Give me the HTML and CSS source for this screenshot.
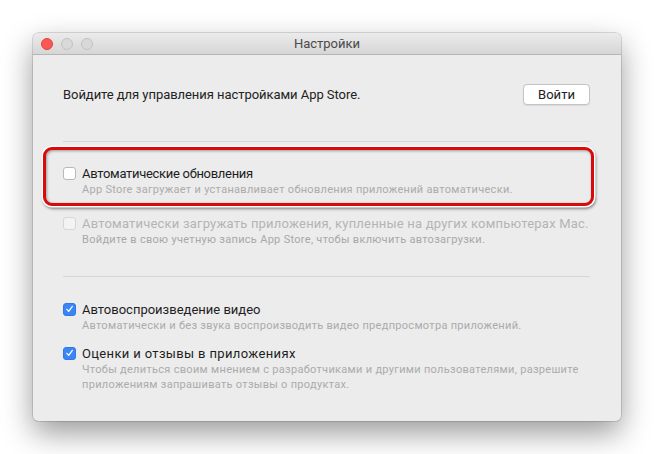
FILE: index.html
```html
<!DOCTYPE html>
<html lang="ru">
<head>
<meta charset="utf-8">
<title>Настройки</title>
<link rel="stylesheet" href="styles.css">
</head>
<body>
<div class="stage">
  <div class="window">
    <div class="titlebar">
      <div class="lights">
        <span class="light close"></span>
        <span class="light"></span>
        <span class="light"></span>
      </div>
      <div class="title">Настройки</div>
    </div>
    <div class="content">
      <div class="login-row">
        <span class="login-text">Войдите для управления настройками App Store.</span>
        <button class="btn">Войти</button>
      </div>
      <div class="sep sep-first"></div>
      <div class="item item-updates highlight">
        <div class="label-row"><span class="box"></span><span class="label">Автоматические обновления</span></div>
        <div class="sub">App Store загружает и устанавливает обновления приложений автоматически.</div>
      </div>
      <div class="item item-downloads disabled">
        <div class="label-row"><span class="box"></span><span class="label">Автоматически загружать приложения, купленные на других компьютерах Mac.</span></div>
        <div class="sub">Войдите в свою учетную запись App Store, чтобы включить автозагрузки.</div>
      </div>
      <div class="sep sep-second"></div>
      <div class="item item-video">
        <div class="label-row"><span class="box checked"><svg viewBox="0 0 14 14" width="14" height="14"><path d="M3.6 7.4 L6 10 L10.6 3.6" fill="none" stroke="#fff" stroke-width="1.6" stroke-linecap="round" stroke-linejoin="round"/></svg></span><span class="label">Автовоспроизведение видео</span></div>
        <div class="sub">Автоматически и без звука воспроизводить видео предпросмотра приложений.</div>
      </div>
      <div class="item item-ratings">
        <div class="label-row"><span class="box checked"><svg viewBox="0 0 14 14" width="14" height="14"><path d="M3.6 7.4 L6 10 L10.6 3.6" fill="none" stroke="#fff" stroke-width="1.6" stroke-linecap="round" stroke-linejoin="round"/></svg></span><span class="label">Оценки и отзывы в приложениях</span></div>
        <div class="sub">Чтобы делиться своим мнением с разработчиками и другими пользователями, разрешите приложениям запрашивать отзывы о продуктах.</div>
      </div>
    </div>
  </div>
</div>
</body>
</html>
```

FILE: styles.css
```css
* { box-sizing: border-box; }
html, body { margin: 0; padding: 0; background: #ffffff; }
body {
  font-family: Roboto, "Noto Sans", "Liberation Sans", sans-serif;
  -webkit-font-smoothing: antialiased;
}
.stage {
  padding: 33px 0 0 33px;
  width: 654px;
  height: 454px;
}
.window {
  width: 588px;
  height: 388px;
  background: #ececec;
  border-radius: 5px;
  box-shadow: 0 0 0 0.5px rgba(0,0,0,0.25), 0 12px 30px rgba(0,0,0,0.4);
}
.titlebar {
  height: 22px;
  background: linear-gradient(#ebebeb, #d6d6d6);
  border-bottom: 1px solid #b5b5b5;
  border-radius: 5px 5px 0 0;
  display: flex;
  align-items: center;
  position: relative;
}
.lights {
  display: flex;
  gap: 8px;
  padding-left: 8px;
}
.light {
  width: 12px;
  height: 12px;
  border-radius: 50%;
  background: #d9d9d9;
  border: 1px solid #c2c2c2;
}
.light.close {
  background: #fc5753;
  border-color: #e0443e;
}
.title {
  position: absolute;
  left: 0;
  right: 0;
  text-align: center;
  font-size: 13px;
  color: #4a4a4a;
  pointer-events: none;
}
.content {
  padding: 29px 31px 0 30px;
}
.login-row {
  display: flex;
  align-items: center;
  justify-content: space-between;
  height: 21px;
}
.login-text {
  font-size: 13px;
  color: #222;
  letter-spacing: -0.05px;
}
.btn {
  width: 67px;
  height: 21px;
  background: #ffffff;
  border: 1px solid #c4c4c4;
  border-radius: 4px;
  font-family: inherit;
  font-size: 13px;
  color: #222;
  padding: 0;
  box-shadow: 0 0.5px 1px rgba(0,0,0,0.08);
}
.sep {
  height: 1px;
  background: #d6d6d6;
}
.sep-first { margin-top: 36px; }
.sep-second { margin-top: 29px; }
.item { position: relative; }
.item-updates { margin-top: 23px; }
.item-downloads { margin-top: 18px; }
.item-video { margin-top: 24px; }
.item-ratings { margin-top: 12px; }
.label-row {
  display: flex;
  align-items: center;
  height: 16px;
}
.box {
  width: 13px;
  height: 13px;
  border: 1px solid #b8b8b8;
  border-radius: 3px;
  background: #ffffff;
  margin-right: 6px;
  flex: none;
  display: flex;
  align-items: center;
  justify-content: center;
}
.box.checked {
  background: #3a86f7;
  border-color: #2f78e6;
}
.box svg { display: block; width: 12px; height: 12px; }
.label {
  font-size: 13px;
  color: #1e1e1e;
  white-space: nowrap;
}
.item-updates .label { letter-spacing: -0.3px; }
.item-ratings .label { letter-spacing: 0.35px; }
.sub {
  margin-top: 1px;
  padding-left: 19px;
  font-size: 11px;
  line-height: 15px;
  letter-spacing: 0.3px;
  color: #ababab;
}
.disabled .label { color: #b4b4b4; letter-spacing: 0.2px; }
.disabled .box { border-color: #d6d6d6; background: #f3f3f3; }
.disabled .sub { color: #a8a8a8; }
.highlight::after {
  content: "";
  position: absolute;
  left: -20px;
  right: -4px;
  top: -18px;
  bottom: -9px;
  border: 3px solid #d80a0a;
  border-radius: 9px;
  box-shadow: 0 0 0 1.5px #ffffff, 1px 2px 3px 1px rgba(0,0,0,0.45), inset 1px 1px 3px rgba(0,0,0,0.35);
  pointer-events: none;
}
```
